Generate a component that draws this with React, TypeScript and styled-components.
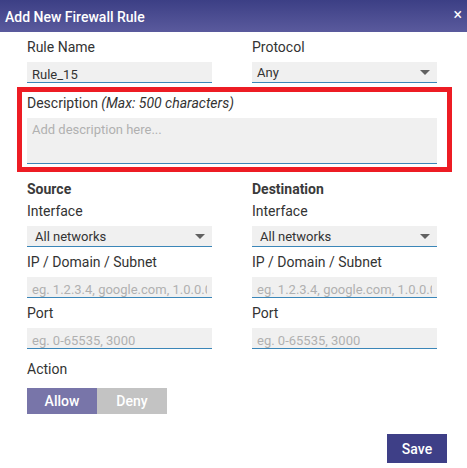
import styled, { createGlobalStyle } from "styled-components";

const GlobalStyle = createGlobalStyle`
  html, body {
    margin: 0;
    padding: 0;
    background: #fff;
  }
  body {
    font-family: Roboto, "Liberation Sans", Arial, sans-serif;
    color: #333;
  }
`;

type Endpoint = "Source" | "Destination";

function EndpointColumn({ title }: { title: Endpoint }) {
  return (
    <Column>
      <SectionTitle>{title}</SectionTitle>
      <Label>Interface</Label>
      <Select $indent={8}>
        <span>All networks</span>
        <Caret />
      </Select>
      <Label>IP / Domain / Subnet</Label>
      <Input placeholder="eg. 1.2.3.4, google.com, 1.0.0.0/16" />
      <Label>Port</Label>
      <Input placeholder="eg. 0-65535, 3000" />
    </Column>
  );
}

function App() {
  return (
    <Dialog>
      <GlobalStyle />
      <Header>
        <Title>Add New Firewall Rule</Title>
        <Close>×</Close>
      </Header>
      <Body>
        <Row>
          <Column>
            <Label>Rule Name</Label>
            <Input defaultValue="Rule_15" />
          </Column>
          <Column>
            <Label>Protocol</Label>
            <Select>
              <span>Any</span>
              <Caret />
            </Select>
          </Column>
        </Row>

        <Highlight>
          <Label>
            Description <Hint>(Max: 500 characters)</Hint>
          </Label>
          <TextArea placeholder="Add description here..." />
        </Highlight>

        <Row $top={8}>
          <EndpointColumn title="Source" />
          <EndpointColumn title="Destination" />
        </Row>

        <Label $top={5}>Action</Label>
        <Toggle>
          <ToggleButton $active>Allow</ToggleButton>
          <ToggleButton>Deny</ToggleButton>
        </Toggle>

        <Footer>
          <SaveButton>Save</SaveButton>
        </Footer>
      </Body>
    </Dialog>
  );
}

const Dialog = styled.div`
  width: 467px;
  height: 468px;
  background: #fff;
  overflow: hidden;
`;

const Header = styled.div`
  height: 32px;
  display: flex;
  align-items: center;
  justify-content: space-between;
  padding: 0 5px;
  background: linear-gradient(180deg, #3c3f85 0%, #5a5a9d 100%);
  color: #fff;
`;

const Title = styled.div`
  font-size: 14px;
  font-weight: 500;
  margin-top: 1px;
`;

const Close = styled.div`
  font-size: 16px;
  line-height: 1;
  margin-top: -2px;
`;

const Body = styled.div`
  padding: 6px 30px 0 27px;
`;

const Row = styled.div<{ $top?: number }>`
  display: grid;
  grid-template-columns: 1fr 1fr;
  column-gap: 40px;
  margin-top: ${(p) => p.$top ?? 0}px;
`;

const Column = styled.div`
  display: flex;
  flex-direction: column;
`;

const Label = styled.div<{ $top?: number }>`
  font-size: 14px;
  line-height: 18px;
  color: #333;
  margin-top: ${(p) => p.$top ?? 0}px;
  margin-bottom: 6px;
`;

const Hint = styled.i`
  font-style: italic;
`;

const SectionTitle = styled.div`
  font-size: 14px;
  font-weight: 700;
  line-height: 18px;
  color: #3a3a3a;
  margin-bottom: 4px;
`;

const fieldBase = `
  box-sizing: border-box;
  width: 100%;
  background: #f0f0f0;
  border: none;
  border-bottom: 1px solid #3b86b8;
  border-radius: 0;
  font-family: Roboto, "Liberation Sans", Arial, sans-serif;
  font-size: 13px;
  color: #333;
  outline: none;
`;

const Input = styled.input`
  ${fieldBase}
  height: 21px;
  padding: 4px 5px 0;
  margin-bottom: 6px;

  &::placeholder {
    color: #b0b0b0;
  }
`;

const Select = styled.div<{ $indent?: number }>`
  ${fieldBase}
  height: 21px;
  display: flex;
  align-items: flex-end;
  justify-content: space-between;
  padding: 0 7px 1px ${(p) => p.$indent ?? 5}px;
  margin-bottom: 6px;
  line-height: 16px;
`;

const Caret = styled.span`
  align-self: center;
  margin-top: 1px;
  width: 0;
  height: 0;
  border-left: 5px solid transparent;
  border-right: 5px solid transparent;
  border-top: 5px solid #616161;
`;

const Highlight = styled.div`
  margin: -2px -15px 0 -10px;
  border: 5px solid #ed1c24;
  padding: 2px 10px 3px 5px;
`;

const TextArea = styled.textarea`
  ${fieldBase}
  display: block;
  height: 46px;
  resize: none;
  padding: 4px 5px;
  border-bottom: 1px solid #3b86b8;

  &::placeholder {
    color: #b0b0b0;
  }
`;

const Toggle = styled.div`
  display: flex;
  margin-top: 10px;
`;

const ToggleButton = styled.button<{ $active?: boolean }>`
  width: 70px;
  height: 26px;
  border: none;
  border-radius: 0;
  padding: 0;
  background: ${(p) => (p.$active ? "#7875a9" : "#c3c3c3")};
  color: #fff;
  font-family: Roboto, "Liberation Sans", Arial, sans-serif;
  font-size: 14px;
  font-weight: 500;
`;

const Footer = styled.div`
  display: flex;
  justify-content: flex-end;
  margin-top: 20px;
  margin-right: -10px;
`;

const SaveButton = styled.button`
  width: 60px;
  height: 29px;
  border: none;
  border-radius: 0;
  padding: 0;
  background: #3e3f87;
  color: #fff;
  font-family: Roboto, "Liberation Sans", Arial, sans-serif;
  font-size: 14px;
  font-weight: 500;
`;

export default App;
